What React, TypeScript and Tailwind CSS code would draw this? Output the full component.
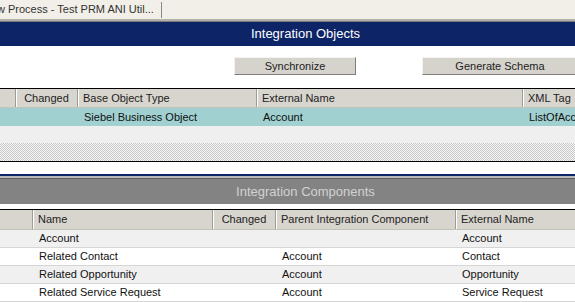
import React from 'react';

// Siebel Tools style "Integration Objects" screen
const font = "font-['Liberation_Sans',Arial,sans-serif]";

interface Col {
  w?: string;
  label: string;
  align?: 'left' | 'center';
}

const objectCols: Col[] = [
  { w: 'w-[16px]', label: '' },
  { w: 'w-[62px]', label: 'Changed', align: 'center' },
  { w: 'w-[179px]', label: 'Base Object Type' },
  { w: 'w-[266px]', label: 'External Name' },
  { label: 'XML Tag' },
];

const componentCols: Col[] = [
  { w: 'w-[33px]', label: '' },
  { w: 'w-[180px]', label: 'Name' },
  { w: 'w-[63px]', label: 'Changed', align: 'center' },
  { w: 'w-[180px]', label: 'Parent Integration Component' },
  { label: 'External Name' },
];

const components = [
  { name: 'Account', parent: '', ext: 'Account' },
  { name: 'Related Contact', parent: 'Account', ext: 'Contact' },
  { name: 'Related Opportunity', parent: 'Account', ext: 'Opportunity' },
  { name: 'Related Service Request', parent: 'Account', ext: 'Service Request' },
];

function HeaderRow({ cols, h }: { cols: Col[]; h: string }) {
  return (
    <div className={`flex ${h} shrink-0 border-b border-[#c4c1b9] bg-[#d8d5ce] text-[11px] text-[#222]`}>
      {cols.map((c, i) => (
        <div
          key={i}
          className={`${c.w ?? 'flex-1'} flex items-center overflow-hidden whitespace-nowrap ${
            c.w ? 'border-r border-[#9e9b93]' : ''
          } ${i > 0 ? 'shadow-[inset_1px_0_0_#ffffff]' : ''} ${
            c.align === 'center' ? 'justify-center' : 'pl-[5px]'
          }`}
        >
          {c.label}
        </div>
      ))}
    </div>
  );
}

function Cell({ w, children }: { w?: string; children?: React.ReactNode }) {
  return (
    <div className={`${w ?? 'flex-1'} flex items-center overflow-hidden whitespace-nowrap pl-[6px]`}>
      {children}
    </div>
  );
}

function Button({ label, width }: { label: string; width: string }) {
  return (
    <div
      className={`${width} flex h-[18px] items-center justify-center border border-t-[#f4f3ef] border-l-[#f4f3ef] border-r-[#7f7d78] border-b-[#7f7d78] bg-[#d6d3cc] text-[11px] text-[#222]`}
    >
      {label}
    </div>
  );
}

export default function App() {
  return (
    <div className={`${font} flex h-[302px] w-[575px] flex-col overflow-hidden bg-white`}>
      {/* tab strip */}
      <div className="flex h-[19px] shrink-0 items-center bg-[#f1efe7] text-[11px] text-[#333]">
        <span className="-ml-[3px] whitespace-nowrap pr-[7px]">w Process - Test PRM ANI Util...</span>
        <div className="h-[16px] w-px bg-[#8a8884]" />
      </div>
      <div className="h-[3px] shrink-0 border-b border-[#7c7a75] bg-[#b3b1ab]" />

      {/* title */}
      <div className="flex h-[24px] shrink-0 items-center justify-center bg-[#0d2467] pl-[36px] text-[13px] text-white">
        Integration Objects
      </div>

      {/* buttons */}
      <div className="flex h-[42px] shrink-0 items-start pt-[11px]">
        <div className="ml-[234px]">
          <Button label="Synchronize" width="w-[122px]" />
        </div>
        <div className="ml-[66px]">
          <Button label="Generate Schema" width="w-[156px]" />
        </div>
      </div>

      {/* integration objects list */}
      <div className="shrink-0 border-t border-black">
        <HeaderRow cols={objectCols} h="h-[19px]" />
        <div className="flex h-[18px] bg-[#a0d0d0] text-[11px] text-[#111]">
          <Cell w="w-[16px]" />
          <Cell w="w-[62px]" />
          <Cell w="w-[179px]">Siebel Business Object</Cell>
          <Cell w="w-[266px]">Account</Cell>
          <Cell>ListOfAccount</Cell>
        </div>
        <div className="h-[17px] bg-[#efefef]" />
        <div className="h-[18px] bg-[image:repeating-conic-gradient(#c9c9c9_0_25%,#f5f5f5_0_50%)] bg-[length:2px_2px]" />
      </div>
      <div className="h-px shrink-0 bg-black" />
      <div className="h-[12px] shrink-0 bg-white" />

      {/* integration components title */}
      <div className="h-[2px] shrink-0 bg-[#0d2467]" />
      <div className="h-[2px] shrink-0 bg-[#b8b8b8]" />
      <div className="h-px shrink-0 bg-[#5e5e5e]" />
      <div className="flex h-[25px] shrink-0 items-center justify-center bg-[#838383] pl-[36px] text-[13px] text-[#d2d2d2]">
        Integration Components
      </div>
      <div className="h-[5px] shrink-0 bg-white" />

      {/* integration components list */}
      <div className="shrink-0 border-t border-black">
        <HeaderRow cols={componentCols} h="h-[20px]" />
        {components.map((r, i) => (
          <div
            key={r.name}
            className={`flex h-[18px] border-b border-[#d6d6d6] text-[11px] text-[#111] ${
              i % 2 === 0 ? 'bg-[#f0f0f0]' : 'bg-white'
            }`}
          >
            <Cell w="w-[33px]" />
            <Cell w="w-[180px]">{r.name}</Cell>
            <Cell w="w-[63px]" />
            <Cell w="w-[180px]">{r.parent}</Cell>
            <Cell>{r.ext}</Cell>
          </div>
        ))}
      </div>
    </div>
  );
}
